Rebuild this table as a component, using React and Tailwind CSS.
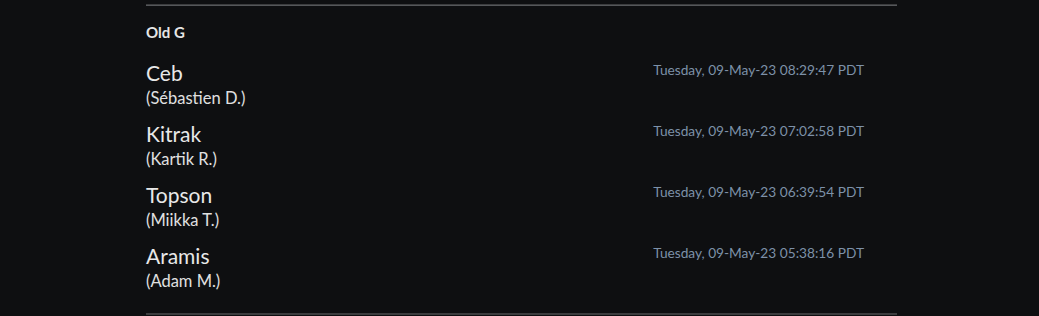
import React from "react";

const players = [
	{ name: "Ceb", real: "(Sébastien D.)", time: "Tuesday, 09-May-23 08:29:47 PDT" },
	{ name: "Kitrak", real: "(Kartik R.)", time: "Tuesday, 09-May-23 07:02:58 PDT" },
	{ name: "Topson", real: "(Miikka T.)", time: "Tuesday, 09-May-23 06:39:54 PDT" },
	{ name: "Aramis", real: "(Adam M.)", time: "Tuesday, 09-May-23 05:38:16 PDT" },
];

const App = () => {
	return (
		<div className="w-full h-[316px] bg-[#0e0f11] overflow-hidden font-['Lato',sans-serif]">
			<div className="ml-[146px] w-[751px] pt-[4px]">
				<div className="h-[2px] bg-[#3b3c3e] border-b border-[#55575a]"></div>
				<h2 className="mt-[16px] text-[15px] font-bold text-[#e6e6e6] leading-5">Old G</h2>
				<ul className="mt-[16px] pb-[11px] flex flex-col">
					{players.map((p) => (
						<li key={p.name} className="h-[61px] flex justify-between pr-[33px]">
							<div className="flex flex-col">
								<span className="text-[21px] leading-[30px] text-[#e8e8e8]">{p.name}</span>
								<span className="text-[16.5px] leading-[20px] text-[#e0e0e0]">{p.real}</span>
							</div>
							<span className="mt-[2px] text-[13.7px] leading-5 text-[#7d91a8]">{p.time}</span>
						</li>
					))}
				</ul>
				<div className="h-[2px] bg-[#3b3c3e]"></div>
			</div>
		</div>
	);
};

export default App;
